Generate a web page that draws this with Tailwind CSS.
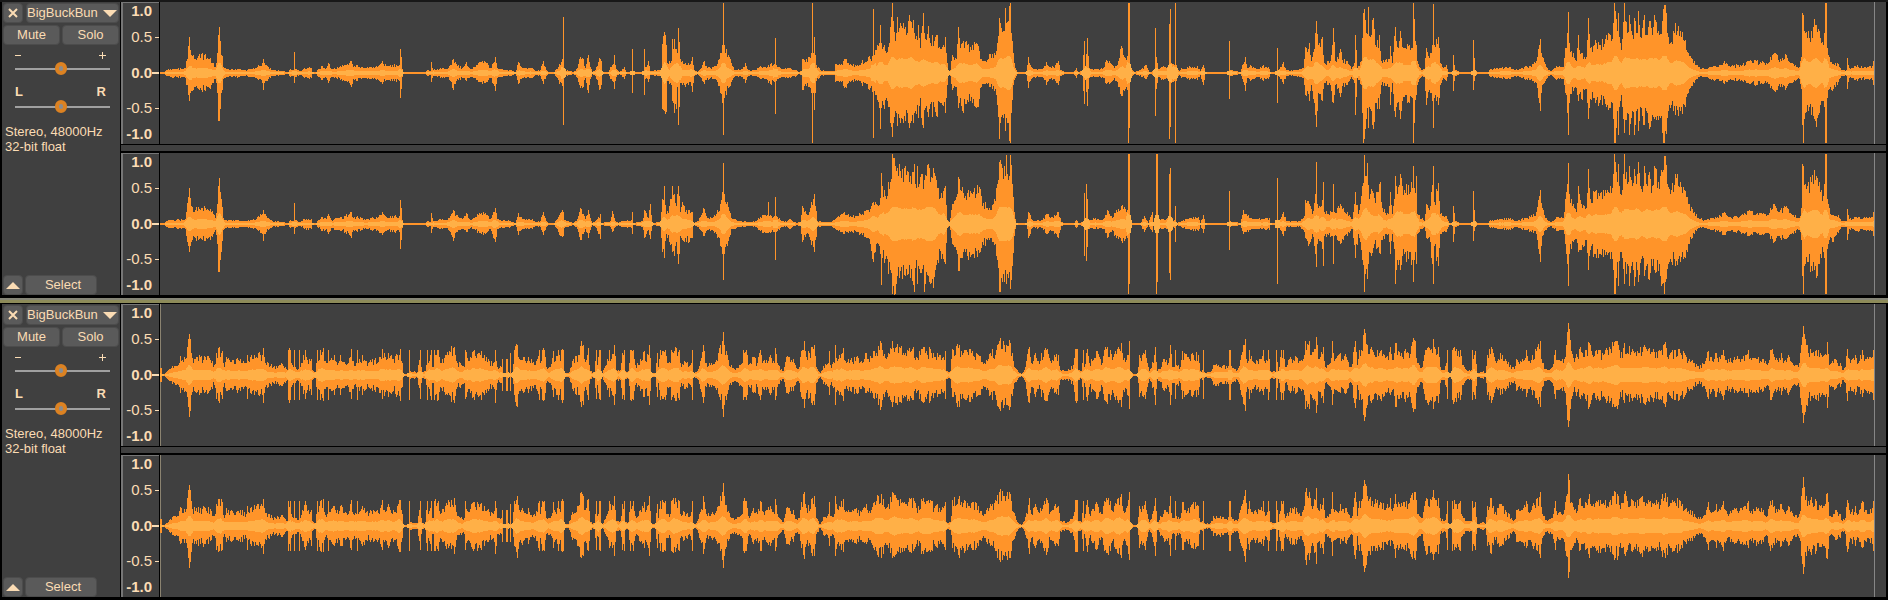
<!DOCTYPE html>
<html lang="en">
<head>
<meta charset="utf-8">
<title>BigBuckBunny – audio tracks</title>
<script src="https://cdn.jsdelivr.net/npm/@tailwindcss/browser@4"></script>
</head>
<body class="bg-black font-['Liberation_Sans',Arial,sans-serif] text-[13px] text-[#fbdcb4]">
<main id="tracks" class="flex flex-col border-t-2 border-[#181818] bg-black pb-[3px]"></main>

<template id="track-template">
  <section class="flex pl-[2px] pr-[2px]">
    <div class="flex w-[118px] shrink-0 flex-col bg-[#404040] px-px pt-px">
      <div class="flex gap-[3px]">
        <button class="close flex h-5 w-5 items-center justify-center rounded-sm border border-[#4c4c4c] bg-[#5a5a5a]" aria-label="Close track">
          <svg width="10" height="10" viewBox="0 0 10 10"><path d="M1 1L9 9M9 1L1 9" stroke="#fbdcb4" stroke-width="2"/></svg>
        </button>
        <button class="flex h-5 flex-1 items-center justify-between rounded-sm border border-[#4c4c4c] bg-[#5a5a5a] pr-px leading-4">
          <span>BigBuckBun</span>
          <svg width="14" height="7" viewBox="0 0 14 7"><path d="M0 0H14L7 7Z" fill="#fbdcb4"/></svg>
        </button>
      </div>
      <div class="mt-[2px] flex gap-[2px]">
        <button class="h-5 flex-1 rounded-sm border border-[#4c4c4c] bg-[#5a5a5a] leading-4">Mute</button>
        <button class="h-5 flex-1 rounded-sm border border-[#4c4c4c] bg-[#5a5a5a] leading-4">Solo</button>
      </div>
      <div class="mt-1 flex h-[13px] items-center justify-between pl-3 pr-[13px]" aria-hidden="true">
        <span class="h-px w-[6px] bg-[#fbdcb4]"></span>
        <svg width="7" height="7" viewBox="0 0 7 7"><path d="M3.5 0V7M0 3.5H7" stroke="#fbdcb4"/></svg>
      </div>
      <input type="range" value="48" aria-label="Gain" class="ml-3 mr-[9px] h-[14px] appearance-none bg-transparent [&::-webkit-slider-runnable-track]:h-[2px] [&::-webkit-slider-runnable-track]:bg-[#a0a0a0] [&::-webkit-slider-thumb]:-mt-[6px] [&::-webkit-slider-thumb]:h-[13px] [&::-webkit-slider-thumb]:w-3 [&::-webkit-slider-thumb]:appearance-none [&::-webkit-slider-thumb]:rounded-full [&::-webkit-slider-thumb]:border-4 [&::-webkit-slider-thumb]:border-[#dc8222] [&::-webkit-slider-thumb]:bg-[#8c8c8c]">
      <div class="mt-2 flex justify-between pl-3 pr-[13px] font-bold leading-4" aria-hidden="true"><span>L</span><span>R</span></div>
      <input type="range" value="48" aria-label="Pan" class="ml-3 mr-[9px] h-[14px] appearance-none bg-transparent [&::-webkit-slider-runnable-track]:h-[2px] [&::-webkit-slider-runnable-track]:bg-[#a0a0a0] [&::-webkit-slider-thumb]:-mt-[6px] [&::-webkit-slider-thumb]:h-[13px] [&::-webkit-slider-thumb]:w-3 [&::-webkit-slider-thumb]:appearance-none [&::-webkit-slider-thumb]:rounded-full [&::-webkit-slider-thumb]:border-4 [&::-webkit-slider-thumb]:border-[#dc8222] [&::-webkit-slider-thumb]:bg-[#8c8c8c]">
      <p class="mt-[10px] whitespace-nowrap pl-[2px] leading-[15px]">Stereo, 48000Hz<br>32-bit float</p>
      <div class="mt-auto flex gap-[2px]">
        <button class="flex h-5 w-5 items-center justify-center rounded-sm border border-[#4c4c4c] bg-[#5a5a5a]" aria-label="Collapse track">
          <svg width="14" height="7" viewBox="0 0 14 7"><path d="M0 7H14L7 0Z" fill="#fbdcb4"/></svg>
        </button>
        <button class="h-5 w-[72px] rounded-sm border border-[#4c4c4c] bg-[#5a5a5a] pl-1 leading-4">Select</button>
      </div>
    </div>
    <div class="channels ml-px flex min-w-0 flex-1 flex-col"></div>
  </section>
</template>

<template id="channel-template">
  <div class="flex h-[142px]">
    <div class="w-[38px] shrink-0 border-l-2 border-t border-[#767676] bg-[#404040] text-[15px] leading-4">
      <div class="flex items-center justify-end font-bold">1.0<span class="w-[7px]"></span></div>
      <div class="mt-[10px] flex items-center justify-end">0.5<span class="flex w-[7px] justify-end"><span class="h-px w-1 bg-[#fbdcb4]"></span></span></div>
      <div class="mt-5 flex items-center justify-end font-bold">0.0<span class="h-[2px] w-[7px] bg-[#fbdcb4]"></span></div>
      <div class="mt-[19px] flex items-center justify-end">-0.5<span class="flex w-[7px] justify-end"><span class="h-px w-1 bg-[#fbdcb4]"></span></span></div>
      <div class="mt-[10px] flex items-center justify-end font-bold">-1.0<span class="w-[7px]"></span></div>
      <div class="flex justify-end"><span class="bottom-tick mt-[6px] h-px w-[6px]"></span></div>
    </div>
    <div class="wave ml-px flex min-w-0 flex-1 bg-[#404040]">
      <svg class="h-full min-w-0 flex-1" viewBox="160 0 1714 142" preserveAspectRatio="none" shape-rendering="crispEdges" role="img" aria-label="Waveform">
        <path class="peak" fill="#ff9429"/>
        <path class="rms" fill="#ffb047"/>
      </svg>
      <div class="w-3 shrink-0 border-l border-[#868686]"></div>
    </div>
  </div>
</template>

<script>
// Peak envelopes: "position,up[/down]" in pixels around the zero line.
const START = "160,1 164,1 166,3 170,4 185,5 186,12 188,27/22 189,36/28 191,18 195,14 198,17/16 204,18/17 208,14 210,15/16 213,10 215,6 217,20 218,38/48 219,46/48 220,32/36 222,17 223,6 226,4 238,4 245,3 250,4 256,5 258,8/7 262,10 263,14/17 264,10 268,6 272,3 284,2 285,1 288,1 290,4 293,3 294,21/10 295,4 300,2 304,5 311,5 312,1 316,1 318,4 322,7 326,5 328,10 331,4 340,7 345,8 350,12 351,12/14 353,6 357,8 364,5 370,6 378,7 380,9 382,12/11 386,7 392,8 399,8 400,24/25 401,16 402,4 403,1 425,1 427,3 430,2 431,11/9 433,3 440,5 446,4 450,8 453,14/17 456,9/8 462,5 466,11/8 470,4 479,11/9 485,11/10 490,5 495,16/18 497,5 500,4 510,3 515,1 518,11 522,5 532,5 535,2 540,3 543,12/11 546,3 548,1 554,1 556,4 559,9/11 562,14/13";
const END = "1453,18 1455,3 1460,1 1472,1 1473,33/17 1475,3 1477,1 1488,1 1490,4 1500,5 1510,6 1515,3 1524,6 1530,7 1536,12/10 1539,28/30 1540,34/38 1542,16/12 1546,6 1550,2 1556,7 1563,6 1565,25/20 1567,40 1568,61/62 1569,30 1573,20/18 1576,12/15 1578,38/28 1581,20/26 1586,16 1588,55/46 1590,25/26 1595,33/30 1599,28/30 1605,34/31 1610,38/35 1613,50/46 1614,70 1615,62/70 1617,42/38 1618,60/62 1620,30/28 1622,34 1624,70/60 1627,40 1629,58/62 1632,38 1634,55/62 1636,40/38 1638,62/58 1641,35 1644,58/52 1647,38/40 1649,52/56 1652,38/42 1654,58/46 1658,42/47 1662,52/60 1664,68/70 1665,68/58 1667,40/45 1670,30/35 1675,50/42 1680,42/38 1685,33/34 1688,20 1694,12/10 1698,6/4 1704,4 1710,6 1720,8 1724,12/11 1728,7 1740,8 1750,13/11 1760,11 1767,9 1770,16/15 1774,20/18 1780,14 1786,18/15 1791,10 1799,6 1801,16 1802,60/52 1803,58/70 1805,40 1808,42/38 1811,42 1814,54/46 1816,48/54 1819,42/40 1823,28 1824,40/34 1825,70 1826,70 1827,25 1829,16 1832,9/18 1838,9 1841,3 1846,3 1847,15/16 1849,5 1855,7 1865,6 1872,7 1873,12";
const LOUD_LEFT = START + " 563,56/52 564,4 573,1 577,5 580,16/15 583,14 585,5 588,18/20 590,6 592,1 595,3 599,15/17 601,12 602,1 608,1 610,6 613,9 614,18/16 616,4 619,1 622,4 624,6 626,1 631,1 632,24/20 633,1 643,1 644,24/22 645,6 648,12/9 650,2 658,3 661,3 662,29/36 664,41/38 666,28/39 667,10/8 671,12 672,34/28 673,24/30 674,34/40 676,24/36 677,20/14 678,45/52 680,14/10 685,10/14 690,9 692,16/19 694,3 697,1 700,4 704,12/11 706,7 710,5 716,7 720,20 722,28/30 723,70/62 724,28/25 728,18/15 732,7 735,3 742,4 745,10 748,3 755,3 760,7/6 765,6 770,9/11 774,9 775,35/41 776,8 781,4 790,5 796,3 798,1 801,2 802,14/17 805,11 808,16/14 811,20 812,70 813,20 814,36/37 816,8 820,3 826,2 834,2 835,9 842,8 844,14/15 850,9 860,8 862,13 866,11 868,16 872,17/19 873,64/65 874,18 877,28/27 879,30/35 880,48/56 881,30/35 888,26/34 890,46/50 891,56/54 892,70/64 893,52/50 895,32/38 897,56/53 900,50 905,46/48 908,52/50 913,53/50 915,34/38 917,33/32 918,48/45 920,25/25 922,47/52 923,60/55 925,34/35 928,47/44 929,35/36 932,38/44 934,32/34 937,38/44 938,25/28 941,24/30 945,36/40 946,20/25 948,3 950,3 952,18/17 956,14 958,46/35 960,25 962,30/38 965,31 972,28/30 978,27/34 981,14 985,12/11 990,19/14 994,20/18 997,30/32 999,55/66 1000,50 1003,42/45 1005,65/58 1008,52/50 1010,70 1011,40 1013,20/12 1015,5 1017,1 1026,1 1028,16/15 1031,6 1036,4 1043,5 1046,11/12 1050,6 1055,8 1058,12 1060,3 1064,1 1073,1 1076,5 1078,1 1082,2 1084,32/31 1085,3 1087,35/33 1089,5 1095,4 1103,5 1106,13/11 1110,10 1114,5 1118,12/14 1121,27/23 1124,16/18 1127,17 1128,70 1129,70/55 1130,4 1134,1 1138,2 1146,8/6 1149,1 1154,2 1155,45/43 1156,16 1158,4 1163,7 1168,6 1169,49/66 1170,64/54 1171,10 1174,8 1175,70 1176,8 1179,2 1181,5 1190,6 1197,7 1200,2 1203,8/12 1205,1 1228,1 1229,32/26 1230,3 1240,1 1242,8/6 1245,16/18 1247,5 1250,8 1258,4 1262,7 1268,6 1270,1 1276,1 1277,25/30 1278,2 1283,11 1286,3 1296,3 1303,5 1305,26/22 1309,30/28 1311,12 1314,24/30 1316,52/54 1318,28/20 1322,36/28 1324,10 1330,12 1332,28/29 1333,45/30 1335,12 1340,24 1342,13 1347,12 1351,4 1354,10 1355,38/42 1357,5 1361,12 1363,60/70 1364,64/66 1366,40/46 1368,66/55 1370,36 1373,55/56 1376,26/30 1379,38/36 1381,12 1389,14 1390,27/32 1392,10 1395,46/44 1397,26/30 1400,42/46 1405,25/22 1408,27/29 1412,25 1413,70 1414,54/50 1416,28/22 1417,12 1420,5 1424,4 1426,25/32 1430,20 1432,28 1433,69/55 1434,28/25 1438,36/32 1440,10/12 1443,5 1446,8 1448,1 1452,1 " + END;
const LOUD_RIGHT = START + " 563,12 564,4 573,1 577,5 580,16 585,5 588,14 590,6 592,1 595,3 600,10/15 601,1 610,3 612,13/8 615,3 618,1 622,3 631,4 632,12/10 633,1 642,3 644,14 648,6 650,20/15 652,1 660,2 662,25/28 664,38/34 666,10 669,18 672,38/28 674,30/32 676,18 678,38/40 680,12 682,22/16 686,14/18 692,12/14 693,1 698,3 703,16/12 707,6 715,8 720,20/22 722,32/30 723,61/56 724,30 728,17 732,5 740,3 750,2 757,4 762,9 767,9 768,22/9 769,8 774,8 775,27/36 776,8 784,2 790,5 796,1 800,2 802,18 806,10 810,16 814,30/28 817,3 830,2 836,6 844,12/10 850,8 860,10 868,14 873,22/38 876,20 880,26/30 881,51/61 882,38/34 885,28/35 888,42/50 890,42/46 892,70 893,66/62 895,58/70 897,56/52 899,60/54 902,55/55 905,58/52 908,52/50 911,40/45 914,60/68 915,40/44 917,58/60 919,40/45 922,50/45 924,44/68 926,48/48 928,60/52 930,42/60 933,56/64 935,48/46 937,36 942,26/30 945,38/40 947,4 949,2 952,20 957,30 958,47 960,34 962,37/34 965,28 968,34/36 974,36/34 980,35/28 982,18 985,22 988,14 993,20/18 997,40/36 999,62/68 1001,60/54 1003,45/50 1006,69/60 1008,44/54 1010,69/65 1012,40/42 1014,12 1016,1 1026,1 1028,12/14 1032,4 1042,4 1046,10 1052,7 1058,12/14 1061,2 1064,1 1074,1 1076,4 1078,1 1083,2 1084,31/32 1085,5 1086,40/37 1088,5 1098,5 1103,5 1107,14 1112,6 1116,14 1121,18/17 1127,14 1128,70 1129,70/60 1130,2 1132,1 1140,1 1144,8 1148,1 1152,12/8 1153,1 1155,5 1156,70 1157,70/58 1158,5 1168,6 1169,50/49 1170,56 1171,6 1174,4 1175,18 1176,1 1181,3 1190,6 1198,7 1200,1 1203,9 1205,1 1228,1 1229,33/26 1230,3 1240,1 1243,14/10 1250,6 1262,5 1269,6 1270,1 1276,1 1277,46/60 1278,2 1283,12 1286,3 1300,3 1304,8 1305,24/14 1309,20 1312,10 1315,30 1316,62/43 1317,20 1321,18 1323,42 1324,12 1332,12 1333,40 1334,12 1340,20 1347,12 1352,5 1355,32/34 1358,10 1362,38/36 1364,69/68 1365,48/50 1367,61/55 1369,25/28 1371,35/32 1374,26/20 1380,42/30 1382,16 1388,10 1390,32/30 1392,10 1394,25 1395,48/60 1397,30/36 1400,50/46 1402,38/32 1406,40/38 1410,32/28 1413,58 1414,36 1416,48/40 1417,10 1424,3 1426,20/14 1430,18 1433,58/60 1434,22 1438,41/42 1440,10 1446,8 1449,1 1452,1 " + END;
const LEVEL = "160,7 161,7 162,1 164,1 166,3 172,9 178,10 180,19/18 186,17 187,28/22 188,36/32 189,41/42 190,36 192,17 196,18 200,18 208,19/18 214,10 216,22/24 218,27/26 222,24 224,8 226,18/16 232,15 240,16 246,12 247,20/24 248,14 250,18 258,22/20 262,20 263,27/28 264,18 268,12 274,9 282,11 287,5 288,25 290,25 291,12 293,8 294,25 295,8 298,6 299,25 300,8 305,25/24 307,15 310,14 311,16/20 312,5 315,2 316,12 317,25 318,14 320,25 323,27/26 324,14 327,12 328,25 329,14 334,20 336,13 340,20 348,12 351,26/24 352,14 356,12 357,25 358,12 362,20 366,14 374,15 380,18 382,26/24 386,15 388,22 393,16 397,20 400,26 402,12 403,1 408,1 409,25 410,4 417,3 418,10 420,25/24 421,8 422,3 425,4 427,25 428,12 431,25 432,8 433,8 434,25 438,25 440,12 445,20 449,24/20 454,28 456,14 464,8 465,25/24 468,14 472,23 478,22 484,20 489,14 493,12 495,25/28 497,8 501,8 502,16 503,2 505,2 506,16 507,16 508,1 509,1 510,22/16 511,1 512,1 514,25/20 517,30/32 519,16 528,18 535,10 539,25 540,12 542,25 544,25 546,8 550,8 553,24/22 555,14 558,25 560,14 561,25 563,25 564,2 568,2 572,14 578,20 581,34/32 583,30 584,16 588,27/25 590,4 594,3 596,25/24 597,10 599,25/24 600,25 601,1 606,10 609,25/22 611,16 614,30 616,5 620,5 622,22/24 624,25 625,4 628,4 630,25 633,25 635,10 640,16 644,24/22 645,14 649,30 651,2 655,2 657,22 658,8 660,25 665,25 667,12 670,12 671,25 675,28/26 679,25 680,12 684,14 690,10 692,25 693,2 696,3 700,14 703,30/28 706,12 711,12 716,15 720,30/25 722,34 723,43/42 724,30 728,15 734,6 740,10 742,12 743,25 746,25 748,10 753,18 757,12 760,25 763,14 770,20 774,12 775,27/25 777,12 783,4 786,18 793,16 796,7 799,8 801,24/22 804,34/33 806,18 812,28/30 814,30 816,8 820,2 823,9 828,12 829,24/20 830,10 834,12 835,30 838,16 843,27/26 845,14 856,18 861,14 866,22/18 867,16 874,24 881,32 885,17 888,22 892,34/32 896,28 900,27 905,22 908,24 913,28/25 916,18 923,28 925,22 930,26 934,18 937,22 943,18 945,24 946,4 950,4 952,26/22 959,30/32 961,24 965,25 972,24 978,20 984,12 990,22/20 996,25 999,34 1000,37/36 1004,30 1006,30 1010,32 1013,14 1018,3 1021,1 1024,5 1029,28 1031,12 1035,22 1038,14 1044,25 1047,26 1050,14 1054,20/18 1058,20 1060,5 1067,4 1073,10 1075,26 1077,26 1078,5 1081,4 1083,25 1084,8 1087,26 1089,12 1096,24 1102,12 1104,25 1110,25 1112,15 1118,28 1121,32 1123,15 1127,20 1129,34 1130,3 1133,1 1137,1 1139,20/22 1145,25/24 1149,4 1154,20 1155,28/30 1157,4 1164,16 1168,12 1170,30 1172,8 1174,8 1175,25/24 1176,10 1180,8 1182,24 1188,18 1192,22 1198,20 1200,4 1202,5 1203,25/24 1204,3 1210,3 1213,10 1222,9 1228,9 1229,25 1230,25 1231,9 1237,5 1241,20 1244,30 1245,36 1247,12 1249,25/24 1252,14 1260,16 1263,25/20 1264,14 1267,14 1268,25 1270,4 1275,3 1276,25 1278,4 1281,25 1283,25 1285,8 1290,18 1296,18 1302,14 1304,20 1305,34 1309,34 1311,20 1315,26 1316,38 1318,16 1323,28 1325,8 1330,12 1332,34/30 1334,14 1340,22/18 1346,18 1351,8 1355,34/33 1357,10 1359,25 1361,25 1363,40 1364,46 1365,42 1367,30 1372,25 1380,24 1386,18 1390,28/20 1392,15 1395,32 1398,24 1404,24 1408,22 1412,33 1415,34 1417,12 1422,8 1425,25 1427,27/28 1431,26 1433,36/34 1435,26 1438,28 1440,8 1444,5 1446,12 1447,25/24 1448,2 1451,2 1452,25 1460,25 1462,10 1466,5 1471,5 1472,25 1475,24 1477,1 1480,3 1483,4 1485,2 1487,20 1491,28 1495,14 1500,22/20 1506,14 1514,6 1516,16 1522,16 1526,25/22 1528,14 1532,20 1537,28/25 1540,34/32 1542,12 1546,6 1552,8 1555,25/24 1556,15 1560,14 1564,16 1566,30 1568,52 1569,46 1571,24 1575,17 1580,28/24 1583,18 1589,32 1592,20 1596,25 1602,22 1610,26 1615,34/32 1618,30 1620,17 1624,32/28 1632,26 1640,28 1648,26 1658,24 1665,33/32 1669,20 1674,25 1679,26/25 1686,18 1694,12 1698,9 1704,11 1708,24 1712,14 1716,22 1720,16 1723,25 1726,15 1734,18 1742,16 1748,25/22 1751,15 1758,18 1763,16 1767,10 1770,25 1772,26/22 1776,17 1781,22/20 1784,14 1788,20 1793,10 1799,12 1801,30 1802,38 1803,49/48 1806,30 1810,26 1816,25 1822,18 1824,20 1827,33 1829,10 1835,16/14 1840,12 1842,5 1845,8 1847,26 1850,12 1855,20 1858,12 1862,25/22 1866,16 1872,18 1873,25";

// Expands an envelope to one bar per pixel column, roughened between its points.
function columns(text, seed, rough) {
  const pts = text.split(" ").map(p => {
    const [x, h] = p.split(",");
    const [u, d] = h.split("/").map(Number);
    return [Number(x), u, d ?? u];
  });
  const rand = () => (seed = (seed * 1103515245 + 12345) % 2147483648) / 2147483648;
  const out = [];
  let i = 0;
  for (let x = 160; x < 1874; x++) {
    while (i < pts.length - 2 && pts[i + 1][0] <= x) i++;
    const a = pts[i], b = pts[i + 1];
    const t = Math.min(1, (x - a[0]) / (b[0] - a[0]));
    let u = a[1] + (b[1] - a[1]) * t, d = a[2] + (b[2] - a[2]) * t;
    if (t > 0 && t < 1 && u > 2.5) {
      const k = 1.12 - rand() * rough;
      u *= k;
      d *= k * (0.94 + rand() * 0.12);
    }
    out.push([x, Math.max(1, Math.round(u)), Math.max(1, Math.round(d))]);
  }
  return out;
}
const bars = list => list.map(([x, u, d]) => `M${x} ${71 - u}h1v${u + d}h-1z`).join("");
function rms(cols) {
  return cols.map(([x], i) => {
    const near = cols.slice(Math.max(0, i - 2), i + 3);
    const mean = near.reduce((s, c) => s + c[1] + c[2], 0) / near.length / 2;
    const r = Math.round(Math.min(mean * 0.31, 17));
    return [x, r, r];
  }).filter(c => c[1] > 0);
}

[[LOUD_LEFT, LOUD_RIGHT], [LEVEL, LEVEL]].forEach((channels, n) => {
  if (n) {
    const divider = document.createElement("div");
    divider.className = "mt-[3px] mb-px h-[5px] border-t-2 border-[#858577] bg-[#8d8b59]";
    document.getElementById("tracks").append(divider);
  }
  const track = document.getElementById("track-template").content.cloneNode(true);
  const box = track.querySelector(".channels");
  channels.forEach((data, c) => {
    if (c) {
      const gap = document.createElement("div");
      gap.className = "mt-px mb-[2px] h-[6px] bg-[#404040]";
      box.append(gap);
    }
    const ch = document.getElementById("channel-template").content.cloneNode(true);
    const cols = columns(data, 17 + n * 7 + c, n ? 0.46 : 0.4);
    ch.querySelector(".peak").setAttribute("d", bars(cols));
    ch.querySelector(".rms").setAttribute("d", bars(rms(cols)));
    if (n || c) ch.querySelector(".bottom-tick").classList.add("bg-[#fbdcb4]");
    if (n) ch.querySelector(".wave").classList.add("shadow-[inset_1px_0_#8b8370]");
    box.append(ch);
  });
  document.getElementById("tracks").append(track);
});
</script>
</body>
</html>
